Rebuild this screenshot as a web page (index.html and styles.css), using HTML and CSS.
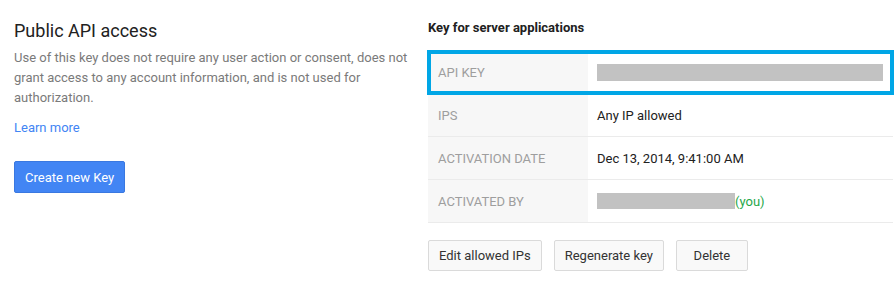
FILE: index.html
```html
<!DOCTYPE html>
<html lang="en">
<head>
    <meta charset="UTF-8">
    <title>Public API access</title>
    <link rel="stylesheet" href="styles.css">
</head>
<body>
    <div class="page">
        <div class="intro">
            <h2>Public API access</h2>
            <p class="desc">Use of this key does not require any user action or consent, does not grant access to any account information, and is not used for authorization.</p>
            <a class="learn" href="#">Learn more</a>
            <button class="primary">Create new Key</button>
        </div>

        <div class="key-panel">
            <h3>Key for server applications</h3>
            <div class="key-table">
                <div class="row highlight">
                    <div class="label">API KEY</div>
                    <div class="value"><span class="redact redact-key"></span></div>
                </div>
                <div class="row">
                    <div class="label">IPS</div>
                    <div class="value">Any IP allowed</div>
                </div>
                <div class="row">
                    <div class="label">ACTIVATION DATE</div>
                    <div class="value">Dec 13, 2014, 9:41:00 AM</div>
                </div>
                <div class="row">
                    <div class="label">ACTIVATED BY</div>
                    <div class="value"><span class="redact redact-user"></span><span class="you">(you)</span></div>
                </div>
            </div>
            <div class="actions">
                <button>Edit allowed IPs</button>
                <button>Regenerate key</button>
                <button class="narrow">Delete</button>
            </div>
        </div>
    </div>
</body>
</html>
```

FILE: styles.css
```css
body {
    font-family: Roboto, "Liberation Sans", Arial, sans-serif;
    margin: 0;
    padding: 0;
    background: #fff;
    color: #212121;
}
.page {
    display: flex;
}
.intro {
    width: 396px;
    flex-shrink: 0;
    padding: 19px 0 0 14px;
}
h2 {
    margin: 0;
    font-size: 18px;
    font-weight: 400;
    line-height: 24px;
    color: #212121;
}
.desc {
    margin: 5px 0 0;
    font-size: 13px;
    line-height: 20px;
    color: #7a7a7a;
}
.learn {
    display: block;
    margin-top: 10px;
    font-size: 13px;
    line-height: 20px;
    color: #4285f4;
    text-decoration: none;
}
button {
    font-family: inherit;
    font-size: 13px;
    height: 31px;
    padding: 0 10px;
    border: 1px solid #dadada;
    border-radius: 2px;
    background: #f9f9f9;
    color: #333;
    cursor: pointer;
}
.primary {
    display: block;
    margin-top: 23px;
    height: 32px;
    background: #4285f4;
    border-color: #3a78e0;
    color: #fff;
}
.key-panel {
    margin-left: 18px;
    width: 465px;
    flex-shrink: 0;
    padding-top: 18px;
}
h3 {
    margin: 0;
    font-size: 13px;
    font-weight: 700;
    line-height: 20px;
    color: #212121;
}
.key-table {
    margin-top: 12px;
    border-top: 1px solid #ebebeb;
}
.row {
    display: flex;
    height: 42px;
    border-bottom: 1px solid #ebebeb;
}
.row.highlight {
    outline: 4px solid #00a6e6;
    outline-offset: -3px;
}
.label {
    width: 150px;
    flex-shrink: 0;
    padding-left: 10px;
    background: #f7f7f7;
    display: flex;
    align-items: center;
    font-size: 13px;
    color: #9e9e9e;
}
.value {
    flex: 1;
    padding-left: 9px;
    display: flex;
    align-items: center;
    font-size: 13px;
    color: #212121;
}
.redact {
    display: inline-block;
    background: #c2c2c2;
}
.redact-key {
    width: 286px;
    height: 17px;
}
.redact-user {
    width: 138px;
    height: 16px;
}
.you {
    color: #1fa84a;
}
.actions {
    display: flex;
    gap: 12px;
    margin-top: 17px;
}
.narrow {
    min-width: 72px;
}
```
